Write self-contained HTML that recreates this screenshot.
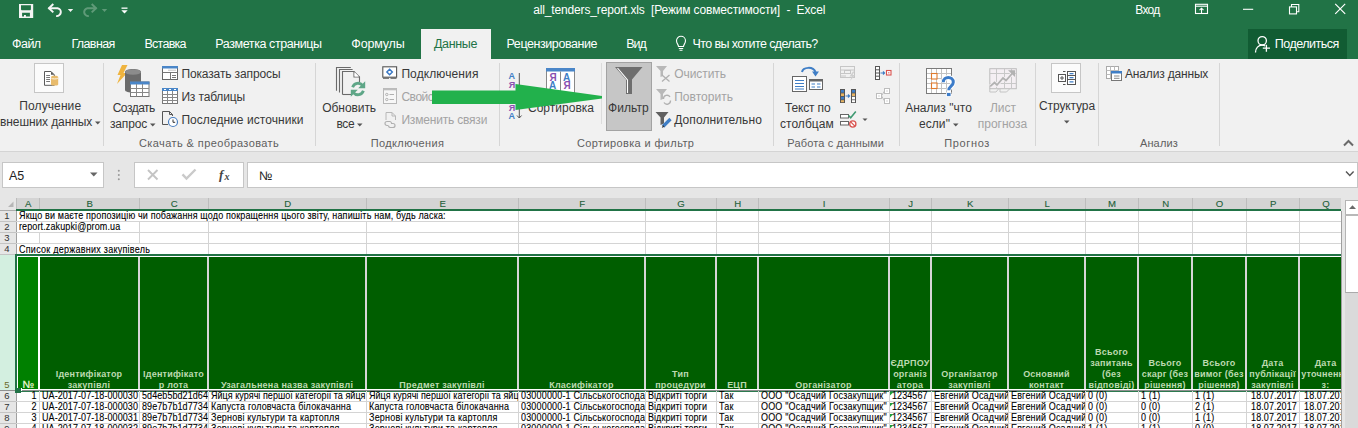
<!DOCTYPE html><html><head><meta charset="utf-8"><style>
*{margin:0;padding:0;box-sizing:border-box}
html,body{width:1358px;height:428px;overflow:hidden;background:#fff;font-family:"Liberation Sans",sans-serif}
.ab{position:absolute}
.t{position:absolute;white-space:nowrap;line-height:1}
.w{color:#fff}
.rb{color:#444;font-size:12px}
.dis{color:#a6a6a6}
.gl{color:#666;font-size:12px}
.sep{position:absolute;width:1px;background:#d6d6d6;top:63px;height:83px}
.cell{position:absolute;white-space:nowrap;overflow:hidden;font-size:9px;line-height:11px;color:#000}
.hd{position:absolute;overflow:hidden;background:#006100;color:#b7dcae;font-weight:bold;font-size:10px;line-height:11px;text-align:center;display:flex;flex-direction:column;justify-content:flex-end}
</style></head><body>

<div class="ab" style="left:0;top:0;width:1358px;height:59px;background:#217346"></div>
<div class="ab" style="left:0;top:59px;width:1358px;height:93px;background:#f1f1f1"></div>
<div class="ab" style="left:0;top:151px;width:1358px;height:1px;background:#d4d4d4"></div>
<div class="ab" style="left:0;top:152px;width:1358px;height:46px;background:#e6e6e6"></div>
<svg class="ab" style="left:0;top:0" width="140" height="29" viewBox="0 0 140 29">
<path fill="#f4f4f4" fill-rule="evenodd" d="M19 4 H33.2 V18 H19 Z M21 5.2 V9.6 L21.6 10.2 H30.3 L30.9 9.6 V5.2 Z M22.1 12.7 V16.5 H24 V15 H25.9 V16.5 H29.9 V12.7 Z"/>
<g fill="none" stroke="#f4f4f4" stroke-width="2">
<path d="M48.5 8.2 H57.6 A3.9 3.9 0 0 1 56.2 15.9"/>
<path d="M53.3 4 L49 8.2 L53.3 12.4"/>
</g>
<path d="M67.8 8.9 H73.2 L70.5 11.9 Z" fill="#f4f4f4"/>
<g fill="none" stroke="#5f9a78" stroke-width="2">
<path d="M96.5 8.2 H87.4 A3.9 3.9 0 0 0 88.8 15.9"/>
<path d="M91.7 4 L96 8.2 L91.7 12.4"/>
</g>
<path d="M101.8 8.9 H107.2 L104.5 11.9 Z" fill="#5f9a78"/>
<rect x="121.5" y="7.5" width="6" height="1.3" fill="#fff"/>
<path d="M121.3 10.3 H127.7 L124.5 13.6 Z" fill="#fff"/>
</svg>
<div class="t" style="left:533.3px;top:3.64px;font-size:12px;color:#fff;letter-spacing:-0.154px;">all_tenders_report.xls&nbsp; [Режим совместимости]&nbsp; -&nbsp; Excel</div>
<div class="t" style="left:1135.2px;top:3.64px;font-size:12px;color:#fff;letter-spacing:-0.664px;">Вход</div>
<svg class="ab" style="left:1190px;top:0" width="168" height="24" viewBox="1190 0 168 24">
<g fill="none" stroke="#fff" stroke-width="1.1">
<rect x="1195.5" y="4.3" width="12" height="9.2"/>
<path d="M1195.5 6.2 H1207.5"/>
<path d="M1201.5 13.5 V8.3 M1199.5 10.2 L1201.5 8.2 L1203.5 10.2"/>
<path d="M1243 9.3 H1253.2"/>
<rect x="1289.5" y="6.9" width="7" height="7"/>
<path d="M1291.5 6.9 V4.5 H1298.8 V11.8 H1296.5"/>
</g>
<path d="M1335.2 3.8 L1345.2 13.8 M1345.2 3.8 L1335.2 13.8" stroke="#fff" stroke-width="1.2"/>
</svg>
<div class="ab" style="left:421px;top:29px;width:70px;height:30px;background:#f1f1f1"></div>
<div class="t" style="left:12.0px;top:37.82px;font-size:12.5px;color:#fff;letter-spacing:-0.534px;">Файл</div>
<div class="t" style="left:71.4px;top:37.82px;font-size:12.5px;color:#fff;letter-spacing:-0.611px;">Главная</div>
<div class="t" style="left:144.5px;top:37.82px;font-size:12.5px;color:#fff;letter-spacing:-0.738px;">Вставка</div>
<div class="t" style="left:215.3px;top:37.82px;font-size:12.5px;color:#fff;letter-spacing:-0.412px;">Разметка страницы</div>
<div class="t" style="left:351.3px;top:37.82px;font-size:12.5px;color:#fff;letter-spacing:-0.158px;">Формулы</div>
<div class="t" style="left:506.5px;top:37.82px;font-size:12.5px;color:#fff;letter-spacing:-0.424px;">Рецензирование</div>
<div class="t" style="left:626.2px;top:37.82px;font-size:12.5px;color:#fff;letter-spacing:-0.942px;">Вид</div>
<div class="t" style="left:433.9px;top:37.82px;font-size:12.5px;color:#217346;letter-spacing:-0.312px;">Данные</div>
<svg class="ab" style="left:673.5px;top:35px" width="14" height="18" viewBox="0 0 14 18">
<g fill="none" stroke="#fff" stroke-width="1.1">
<path d="M4.5 11.5 C4.5 9.5 2.5 8.5 2.5 5.8 A4.5 4.5 0 0 1 11.5 5.8 C11.5 8.5 9.5 9.5 9.5 11.5 Z"/>
<path d="M4.8 13.5 H9.2 M5.5 15.3 H8.5"/>
</g></svg>
<div class="t" style="left:692.5px;top:37.82px;font-size:12.5px;color:#fff;letter-spacing:-0.590px;">Что вы хотите сделать?</div>
<div class="ab" style="left:1248px;top:29px;width:99px;height:30px;background:#115c33"></div>
<svg class="ab" style="left:1250px;top:32px" width="24" height="24" viewBox="0 0 24 24">
<g fill="none" stroke="#fff" stroke-width="1.3">
<circle cx="12.2" cy="8.8" r="4.2"/>
<path d="M5.5 20.5 C5.5 16 8.5 13.2 12 13.2 C13.3 13.2 14.3 13.5 15.2 14"/>
<path d="M16.4 12.7 V19.7 M12.8 16.2 H20"/>
</g></svg>
<div class="t" style="left:1274.8px;top:37.82px;font-size:12.5px;color:#fff;letter-spacing:-0.513px;">Поделиться</div>
<div class="sep" style="left:103px"></div>
<div class="sep" style="left:315px"></div>
<div class="sep" style="left:499px"></div>
<div class="sep" style="left:773px"></div>
<div class="sep" style="left:899px"></div>
<div class="sep" style="left:1035px"></div>
<div class="sep" style="left:1098px"></div>
<div class="sep" style="left:1219px"></div>
<div class="ab" style="left:601px;top:63px;width:1px;height:61px;background:#dcdcdc"></div>
<div class="ab" style="left:34px;top:63px;width:30px;height:30px;background:#fbfbfb;border:1px solid #c6c6c6"></div>
<svg class="ab" style="left:34px;top:63px" width="30" height="30" viewBox="0 0 30 30">
<path d="M10.5 8.5 H17 L20.3 11.8 V22.3 H10.5 Z" fill="#fff" stroke="#5a5a5a" stroke-width="1"/>
<path d="M17 8.5 L20.3 11.8 H17 Z" fill="#5a5a5a"/>
<path d="M12.2 12.5 H16 M12.2 14.5 H16 M12.2 16.5 H16 M12.2 18.5 H16" stroke="#777" stroke-width="1"/>
<path d="M17 14 C17 12.4 24.2 12.4 24.2 14 V21.4 C24.2 23 17 23 17 21.4 Z" fill="#e8bb6c"/>
<path d="M17.3 15.2 C18.5 16.2 22.7 16.2 23.9 15.2" fill="none" stroke="#fff" stroke-width="0.8"/>
</svg>
<div class="t" style="left:19.3px;top:99.74px;font-size:12px;color:#383838;letter-spacing:0.103px;">Получение</div>
<div class="t" style="left:0.0px;top:115.84px;font-size:12px;color:#383838;letter-spacing:-0.095px;">внешних данных</div>
<svg class="ab" style="left:95px;top:121px" width="6" height="4"><path d="M0 0.5H5.5L2.75 3.5Z" fill="#555"/></svg>
<svg class="ab" style="left:110px;top:60px" width="45" height="40" viewBox="0 0 45 40">
<path d="M12 5 L17.5 5 L13.5 13 L17 13 L7 24 L10.5 15 L7.5 15 Z" fill="#efb43f"/>
<path d="M15 12 C15 8 31 8 31 12 V30 C31 33.5 15 33.5 15 30 Z" fill="#6b6b6b"/>
<ellipse cx="23" cy="12" rx="8" ry="2.8" fill="#8c8c8c"/>
<rect x="20.5" y="22" width="18.5" height="14.5" fill="#fff" stroke="#777" stroke-width="1"/>
<rect x="20" y="21.5" width="19.5" height="3" fill="#4a86c8"/>
<path d="M20.5 28.5 H39 M20.5 32.5 H39 M26.5 24 V36.5 M32.5 24 V36.5" stroke="#888" stroke-width="1"/>
</svg>
<div class="t" style="left:112.7px;top:102.24px;font-size:12px;color:#383838;letter-spacing:-0.487px;">Создать</div>
<div class="t" style="left:109.9px;top:117.84px;font-size:12px;color:#383838;letter-spacing:-0.122px;">запрос</div>
<svg class="ab" style="left:150px;top:123px" width="6" height="4"><path d="M0 0.5H5.5L2.75 3.5Z" fill="#555"/></svg>
<svg class="ab" style="left:160px;top:64px" width="20" height="66" viewBox="0 0 20 66">
<rect x="2.5" y="2.5" width="15" height="13" fill="#fff" stroke="#666"/>
<rect x="2" y="2" width="16" height="2.5" fill="#4a86c8"/>
<path d="M2.5 8.5 H17.5 M10.5 8.5 V15.5 M12 11.5 H16 M12 13.5 H16" stroke="#777"/>
<path d="M8.5 6.2 H16.5" stroke="#888" stroke-dasharray="1 1"/>
<rect x="2.5" y="24.5" width="15" height="15" fill="#fff" stroke="#777"/>
<rect x="2" y="24" width="16" height="3" fill="#4a86c8"/>
<path d="M4 25.5 H6 M9 25.5 H11 M14 25.5 H16" stroke="#fff"/>
<path d="M2.5 30.5 H17.5 M2.5 33.5 H17.5 M2.5 36.5 H17.5 M7.5 27 V39.5 M12.5 27 V39.5" stroke="#888"/>
<path d="M2.5 47.5 H9.5 L12.5 50.5 V52 M2.5 47.5 V60.5 H8" fill="none" stroke="#555"/>
<path d="M9.5 47.5 V50.5 H12.5" fill="none" stroke="#555"/>
<circle cx="13" cy="58" r="4.5" fill="#fff" stroke="#4a7fc1" stroke-width="1.2"/>
<path d="M13 55.5 V58.3 H15.2" fill="none" stroke="#333" stroke-width="1"/>
</svg>
<div class="t" style="left:181.4px;top:68.44px;font-size:12px;color:#383838;letter-spacing:-0.125px;">Показать запросы</div>
<div class="t" style="left:181.4px;top:91.14px;font-size:12px;color:#383838;letter-spacing:-0.145px;">Из таблицы</div>
<div class="t" style="left:181.4px;top:114.14px;font-size:12px;color:#383838;letter-spacing:0.055px;">Последние источники</div>
<div class="t" style="left:139.0px;top:137.59px;font-size:11px;color:#5f5f5f;letter-spacing:0.407px;">Скачать &amp; преобразовать</div>
<svg class="ab" style="left:330px;top:62px" width="40" height="38" viewBox="0 0 40 38">
<g fill="none" stroke="#6a6a6a" stroke-width="1.1">
<path d="M6.5 28.8 V5.5 H20.8"/>
<path d="M9.5 30.6 V7.5 H22.6"/>
<path d="M12.5 32.5 V9.5 H24 L29.5 15 V20"/>
<path d="M12.5 32.5 H21"/>
<path d="M24 9.5 V15 H29.5"/>
</g>
<path d="M24.5 10 L29 14.5 H24.5 Z" fill="#fff"/>
<g fill="none" stroke="#5ea687" stroke-width="2.8">
<path d="M22.6 25.2 A5.8 5.8 0 0 1 32.6 23.4"/>
<path d="M33.4 28.8 A5.8 5.8 0 0 1 23.4 30.6"/>
</g>
<path d="M35.2 19.2 V26.2 H28.2 Z" fill="#5ea687"/>
<path d="M20.8 34.8 V27.8 H27.8 Z" fill="#5ea687"/>
</svg>
<div class="t" style="left:322.3px;top:102.14px;font-size:12px;color:#383838;letter-spacing:-0.080px;">Обновить</div>
<div class="t" style="left:336.4px;top:117.84px;font-size:12px;color:#383838;letter-spacing:-0.341px;">все</div>
<svg class="ab" style="left:357px;top:123px" width="6" height="4"><path d="M0 0.5H5.5L2.75 3.5Z" fill="#555"/></svg>
<svg class="ab" style="left:380px;top:64px" width="20" height="66" viewBox="0 0 20 66">
<rect x="2.8" y="2.8" width="13.8" height="10.4" fill="#fff" stroke="#555" stroke-width="1.1"/>
<path d="M3 14.3 H9 M10.5 14.3 H16.5" stroke="#555" stroke-width="1.1"/>
<path d="M9.6 5.3 L12.3 8 L9.6 10.7 L6.9 8 Z" fill="#fff" stroke="#3a78c4" stroke-width="1.5"/>
<rect x="3.5" y="24.5" width="13" height="15" fill="#f7f7f7" stroke="#b8b8b8"/>
<rect x="3.5" y="24.5" width="13" height="1.8" fill="#bdbdbd"/>
<circle cx="6.8" cy="30.5" r="1.2" fill="none" stroke="#b0b0b0"/><circle cx="6.8" cy="35.5" r="1.2" fill="none" stroke="#b0b0b0"/>
<path d="M9.5 30.5 H14 M9.5 35.5 H14" stroke="#b0b0b0"/>
<path d="M6 56 V48.5 H12 L15.5 52 V56 M12 48.5 V52 H15.5" fill="none" stroke="#b8b8b8"/>
<path d="M8.5 61.5 H7 A2 2 0 0 1 7 57.5 H10 A2 2 0 0 1 11.5 59 M11 59.5 H13 A2 2 0 0 1 13 63.5 H10 A2 2 0 0 1 8.5 62" fill="none" stroke="#b0b0b0" stroke-width="1.2"/>
</svg>
<div class="t" style="left:401.4px;top:68.44px;font-size:12px;color:#383838;letter-spacing:0.107px;">Подключения</div>
<div class="t" style="left:401.4px;top:91.14px;font-size:12px;color:#a3a3a3;letter-spacing:-0.459px;">Свойства</div>
<div class="t" style="left:401.4px;top:114.14px;font-size:12px;color:#a3a3a3;letter-spacing:-0.186px;">Изменить связи</div>
<div class="t" style="left:370.8px;top:137.59px;font-size:11px;color:#5f5f5f;letter-spacing:0.355px;">Подключения</div>
<svg class="ab" style="left:505px;top:66px" width="75" height="56" viewBox="0 0 75 56">
<g font-family="Liberation Sans" font-size="9" font-weight="bold">
<text x="3.5" y="13.3" fill="#3f7ec6">А</text>
<text x="3.8" y="21.8" fill="#8a4fb0">Я</text>
<text x="3.8" y="44.7" fill="#8a4fb0">Я</text>
<text x="3.5" y="52.6" fill="#3f7ec6">А</text>
</g>
<path d="M14.3 7 V22 M14.3 38 V52 M12 49.5 L14.3 52 L16.6 49.5" fill="none" stroke="#555" stroke-width="1"/>
<rect x="41.5" y="3.5" width="28" height="24" fill="#fff" stroke="#888"/>
<rect x="41" y="2" width="29" height="3.5" fill="#4a86c8"/>
<path d="M55.5 5.5 V27.5" stroke="#888"/>
<g font-family="Liberation Sans" font-size="10" font-weight="bold">
<text x="44.5" y="14.6" fill="#8a4fb0">Я</text>
<text x="44" y="22.8" fill="#3f7ec6">А</text>
<text x="58" y="14.6" fill="#3f7ec6">А</text>
<text x="58.5" y="22.8" fill="#8a4fb0">Я</text>
</g>
</svg>
<div class="t" style="left:528.0px;top:102.14px;font-size:12px;color:#383838;letter-spacing:0.014px;">Сортировка</div>
<div class="ab" style="left:606px;top:62px;width:46px;height:69px;background:#c6c6c6;border:1px solid #a3a3a3"></div>
<svg class="ab" style="left:606px;top:62px" width="46" height="36" viewBox="0 0 46 36">
<path d="M9 5 H36.5 L26 17.5 V32 H20 V17.5 Z" fill="#6e6e6e"/>
<path d="M11.5 6 L21.5 18 V31" fill="none" stroke="#fff" stroke-width="1.1"/>
</svg>
<div class="t" style="left:608.0px;top:102.14px;font-size:12px;color:#383838;letter-spacing:0.081px;">Фильтр</div>
<svg class="ab" style="left:654px;top:64px" width="20" height="66" viewBox="0 0 20 66">
<path d="M2 2 H13 L9 7 V12 L6.5 13 V7 Z" fill="#b8b8b8"/>
<path d="M8 11 L15.5 17.5 M15.5 11 L8 17.5" stroke="#b0b0b0" stroke-width="1.3"/>
<path d="M2 25 H13 L9 30 V35 L6.5 36 V30 Z" fill="#b8b8b8"/>
<path d="M9.5 35 A3.5 3.5 0 0 1 16 33 M16.5 36.5 A3.5 3.5 0 0 1 10 38.5" fill="none" stroke="#b0b0b0" stroke-width="1.3"/>
<path d="M1.5 48 H14.5 L10 53.5 V59.5 L6.5 61 V53.5 Z" fill="#606060"/>
<path d="M9 62.5 L16.5 55" stroke="#3f7ec6" stroke-width="3.2"/><path d="M7.8 64 L9 61 L10.5 62.5 Z" fill="#333"/>
</svg>
<div class="t" style="left:674.2px;top:68.44px;font-size:12px;color:#a3a3a3;letter-spacing:-0.056px;">Очистить</div>
<div class="t" style="left:674.2px;top:91.14px;font-size:12px;color:#a3a3a3;letter-spacing:0.025px;">Повторить</div>
<div class="t" style="left:674.2px;top:114.14px;font-size:12px;color:#383838;letter-spacing:0.110px;">Дополнительно</div>
<div class="t" style="left:577.0px;top:137.59px;font-size:11px;color:#5f5f5f;letter-spacing:0.369px;">Сортировка и фильтр</div>
<svg class="ab" style="left:788px;top:64px" width="40" height="32" viewBox="0 0 40 32">
<rect x="4.5" y="12.5" width="14" height="15" fill="#fff" stroke="#666"/>
<path d="M7 16.5 H16 M7 19.5 H16 M7 22.5 H16 M7 25 H16" stroke="#3f7ec6"/>
<rect x="21.5" y="15.5" width="13" height="10" fill="#fff" stroke="#666"/>
<rect x="21" y="15" width="14" height="2.5" fill="#666"/>
<path d="M23.5 20 H27 M29 20 H32.5 M23.5 23 H27 M29 23 H32.5" stroke="#3f7ec6"/>
<path d="M14 8 C15 3 25 2 27.5 8" fill="none" stroke="#3f7ec6" stroke-width="2"/>
<path d="M24 7.5 H31 L27.5 12.5 Z" fill="#3f7ec6"/>
</svg>
<div class="t" style="left:785.0px;top:102.14px;font-size:12px;color:#383838;letter-spacing:-0.165px;">Текст по</div>
<div class="t" style="left:780.0px;top:117.84px;font-size:12px;color:#383838;letter-spacing:0.031px;">столбцам</div>
<svg class="ab" style="left:838px;top:64px" width="58" height="66" viewBox="0 0 58 66">
<g fill="none" stroke="#c6c6c6" stroke-width="1">
<rect x="2.5" y="2.5" width="14" height="11"/>
<path d="M2.5 6 H16.5 M2.5 9.5 H8 M2.5 12 H8"/>
<rect x="6.5" y="6.5" width="6" height="3"/>
</g>
<path d="M15 7.5 L11.5 12.5 H14 L12 17 L17 11 H14.5 L16.5 7.5 Z" fill="#cfcfcf"/>
<rect x="2" y="25" width="5" height="14" fill="#555"/>
<rect x="3" y="26" width="3" height="2.6" fill="#3f7ec6"/><rect x="3" y="29.4" width="3" height="2.6" fill="#e7b463"/><rect x="3" y="32.8" width="3" height="2.6" fill="#3f7ec6"/><rect x="3" y="36.2" width="3" height="2" fill="#e7b463"/>
<rect x="13" y="25" width="5" height="14" fill="#555"/>
<rect x="14" y="26" width="3" height="2.6" fill="#3f7ec6"/><rect x="14" y="29.4" width="3" height="2.6" fill="#e7b463"/><rect x="14" y="32.8" width="3" height="2.6" fill="#fff"/><rect x="14" y="36.2" width="3" height="2" fill="#fff"/>
<path d="M7.5 32 H11.5 M10 30.5 L11.6 32 L10 33.5" fill="none" stroke="#3f7ec6" stroke-width="1.1"/>
<rect x="2.5" y="50.5" width="8" height="3.5" fill="#fff" stroke="#666"/>
<rect x="2.5" y="57.5" width="8" height="3.5" fill="#fff" stroke="#666"/>
<path d="M10.5 51.5 L12.7 53.8 L17.8 47.5" fill="none" stroke="#3f9a72" stroke-width="1.6"/>
<circle cx="14.8" cy="60" r="3.1" fill="#fff" stroke="#d9534f" stroke-width="1.3"/>
<path d="M12.7 57.9 L16.9 62.1" stroke="#d9534f" stroke-width="1.3"/>
<path d="M24.5 54.5 H29.5 L27 57 Z" fill="#555"/>
<rect x="37.5" y="2.5" width="4" height="13" fill="#fff" stroke="#555"/>
<path d="M37.5 5.8 H41.5 M37.5 9 H41.5 M37.5 12.2 H41.5" stroke="#555"/>
<path d="M42.5 9 H46.5 M45 7.5 L46.6 9 L45 10.5" fill="none" stroke="#3f7ec6" stroke-width="1.1"/>
<rect x="48.5" y="6.5" width="4.5" height="4.5" fill="#fff" stroke="#d9534f" stroke-width="1.1"/>
<rect x="50.2" y="8.2" width="1.2" height="1.2" fill="#d9534f"/>
<g fill="#fff" stroke="#bdbdbd">
<path d="M43.5 31.8 L46.5 27 M43.5 31.8 L46.5 37" fill="none"/>
<rect x="38.5" y="29.5" width="5" height="5"/><rect x="46.5" y="24.5" width="5" height="5"/><rect x="46.5" y="34.5" width="5" height="5"/>
</g>
<path d="M40 32 H42 M48 27 H50 M48 37 H50" stroke="#c8c8c8" stroke-width="0.8"/>
</svg>
<div class="t" style="left:787.3px;top:137.59px;font-size:11px;color:#5f5f5f;letter-spacing:0.155px;">Работа с данными</div>
<svg class="ab" style="left:924px;top:66px" width="34" height="34" viewBox="0 0 34 34">
<rect x="2.5" y="2.5" width="25" height="25" fill="#fff" stroke="#7a7a7a" stroke-width="1"/>
<path d="M3 7.5 H27 M3 12.5 H27 M3 17.5 H27 M3 22.5 H27 M7.5 3 V27 M12.5 3 V27 M17.5 3 V27 M22.5 3 V27" stroke="#c2c2c2"/>
<rect x="7.5" y="7.5" width="5.5" height="5.5" fill="#fff" stroke="#e07b2e" stroke-width="1.1"/>
<rect x="7.5" y="17" width="5.5" height="5.5" fill="#fff" stroke="#e07b2e" stroke-width="1.1"/>
<path d="M19.3 16.2 C19.3 9.8 29.3 9.8 29.3 16.2 C29.3 20 24.8 20.3 24.8 24.2" fill="none" stroke="#fff" stroke-width="5"/>
<path d="M19.3 16.2 C19.3 9.8 29.3 9.8 29.3 16.2 C29.3 20 24.8 20.3 24.8 24.2" fill="none" stroke="#3d7cc9" stroke-width="3"/>
<rect x="22.6" y="26.6" width="4.4" height="4" fill="#3d7cc9" stroke="#fff" stroke-width="0.8"/>
</svg>
<div class="t" style="left:905.2px;top:102.14px;font-size:12px;color:#383838;letter-spacing:0.027px;">Анализ "что</div>
<div class="t" style="left:918.9px;top:117.84px;font-size:12px;color:#383838;letter-spacing:0.092px;">если"</div>
<svg class="ab" style="left:953px;top:123px" width="6" height="4"><path d="M0 0.5H5.5L2.75 3.5Z" fill="#555"/></svg>
<svg class="ab" style="left:987px;top:66px" width="32" height="30" viewBox="0 0 32 30">
<rect x="2.8" y="2.7" width="26.5" height="20" fill="#f4eff3" stroke="#bdbdbd" stroke-width="1"/>
<path d="M9.5 3 V22.5 M17.5 3 V22.5 M24.5 3 V22.5 M3 7.5 H29 M3 17.5 H29" stroke="#c8c8c8" stroke-width="1"/>
<path d="M3.2 20.3 L7.5 16.5 L10 19 L16 12 L19 14.5 L26.5 6" fill="none" stroke="#f4eff3" stroke-width="3.5"/>
<path d="M3.2 20.3 L7.5 16.5 L10 19 L16 12 L19 14.5 L26.5 6" fill="none" stroke="#b2b2b2" stroke-width="1.8"/>
<path d="M21 4.2 H28 V11 Z" fill="#b2b2b2"/>
<path d="M2.8 22.5 V26 H9 L11.5 23 M13 23 V26 H19.5 L22.5 23" fill="none" stroke="#c4c4c4" stroke-width="1"/>
</svg>
<div class="t" style="left:990.0px;top:102.14px;font-size:12px;color:#a3a3a3;letter-spacing:-0.020px;">Лист</div>
<div class="t" style="left:977.8px;top:117.84px;font-size:12px;color:#a3a3a3;letter-spacing:-0.022px;">прогноза</div>
<div class="t" style="left:944.3px;top:137.59px;font-size:11px;color:#5f5f5f;letter-spacing:0.631px;">Прогноз</div>
<div class="ab" style="left:1051px;top:63px;width:30px;height:30px;background:#fbfbfb;border:1px solid #c6c6c6"></div>
<svg class="ab" style="left:1051px;top:63px" width="30" height="30" viewBox="0 0 30 30">
<rect x="7.5" y="11.5" width="7" height="7" fill="#fff" stroke="#555"/>
<path d="M9 15 H13 M11 13 V17" stroke="#555"/>
<path d="M12 8.5 H14.5 M12 21.5 H14.5" stroke="#555"/>
<rect x="16.5" y="8.5" width="8" height="13" fill="#fff" stroke="#555"/>
<path d="M16.5 12.5 H24.5 M16.5 16.5 H24.5" stroke="#555"/>
<path d="M18.5 10.6 H22.5 M18.5 14.6 H22.5 M18.5 18.8 H22.5" stroke="#3f7ec6" stroke-width="1.3"/>
</svg>
<div class="t" style="left:1039.0px;top:100.04px;font-size:12px;color:#383838;letter-spacing:-0.104px;">Структура</div>
<svg class="ab" style="left:1064px;top:120px" width="6" height="4"><path d="M0 0.5H5.5L2.75 3.5Z" fill="#555"/></svg>
<svg class="ab" style="left:1104px;top:64px" width="20" height="20" viewBox="0 0 20 20">
<rect x="2.5" y="2.5" width="12" height="12" fill="#fff" stroke="#aaa"/>
<path d="M2.5 6.5 H14.5 M2.5 10.5 H14.5 M6.5 2.5 V14.5 M10.5 2.5 V14.5" stroke="#bbb"/>
<rect x="7.5" y="7.5" width="10" height="9" fill="#fff" stroke="#777"/>
<rect x="7" y="7" width="11" height="2.5" fill="#3f7ec6"/>
<path d="M10 12 H15.5 M10 14.3 H15.5" stroke="#888"/>
</svg>
<div class="t" style="left:1125.0px;top:68.44px;font-size:12px;color:#383838;letter-spacing:-0.170px;">Анализ данных</div>
<div class="t" style="left:1139.9px;top:137.59px;font-size:11px;color:#5f5f5f;letter-spacing:0.160px;">Анализ</div>
<svg class="ab" style="left:1343px;top:139px" width="12" height="8"><path d="M1 6.5 L5.5 2 L10 6.5" fill="none" stroke="#6a6a6a" stroke-width="2"/></svg>
<div class="ab" style="left:2px;top:162px;width:102px;height:26px;background:#fff;border:1px solid #c6c6c6"></div>
<div class="t" style="left:9px;top:170px;font-size:12.5px;color:#222">A5</div>
<svg class="ab" style="left:89px;top:171px" width="10" height="7"><path d="M1 1.5H8.5L4.75 5.5Z" fill="#666"/></svg>
<svg class="ab" style="left:116px;top:168px" width="6" height="14"><circle cx="2.8" cy="2.8" r="1" fill="#999"/><circle cx="2.8" cy="7" r="1" fill="#999"/><circle cx="2.8" cy="11.2" r="1" fill="#999"/></svg>
<div class="ab" style="left:134px;top:162px;width:110px;height:26px;background:#fff;border:1px solid #c6c6c6"></div>
<svg class="ab" style="left:134px;top:162px" width="110" height="25" viewBox="0 0 110 25">
<path d="M14 8 L23.5 17.5 M23.5 8 L14 17.5" stroke="#c4c4c4" stroke-width="1.9"/>
<path d="M48.5 12.3 L52.5 16.5 L61.5 7.5" fill="none" stroke="#cacaca" stroke-width="2.4"/>
<text x="85" y="16.5" font-family="Liberation Serif" font-style="italic" font-weight="bold" font-size="13" fill="#444">f</text>
<text x="90.5" y="17.5" font-family="Liberation Serif" font-style="italic" font-weight="bold" font-size="10" fill="#444">x</text>
</svg>
<div class="ab" style="left:247px;top:162px;width:111px;height:26px;background:#fff;border:1px solid #c6c6c6;border-right:none"></div>
<div class="ab" style="left:247px;top:162px;width:1111px;height:26px;background:#fff;border:1px solid #c6c6c6"></div>
<div class="t" style="left:259px;top:169.8px;font-size:12.5px;color:#222">№</div>
<svg class="ab" style="left:1344px;top:170px" width="12" height="8"><path d="M2 1.5 L5.8 5.5 L9.6 1.5" fill="none" stroke="#555" stroke-width="1.4"/></svg>
<div class="ab" style="left:0px;top:198px;width:1358px;height:230px;background:#fff;"></div>
<div class="ab" style="left:0px;top:198px;width:16px;height:12px;background:#e6e6e6;"></div>
<svg class="ab" style="left:8px;top:201px" width="6" height="7"><path d="M5.5 0.5 V6 H0 Z" fill="#b5b5b5"/></svg>
<div class="ab" style="left:0px;top:210px;width:16px;height:1px;background:#ababab;"></div>
<div class="ab" style="left:16px;top:198px;width:1325px;height:11px;background:#d4d4d4;"></div>
<div class="ab" style="left:16px;top:198px;width:1px;height:11px;background:#bdbdbd;"></div>
<div class="t" style="left:-1.8999999999999986px;top:198.5px;width:60px;text-align:center;font-size:9.6px;color:#1f5f3a;-webkit-text-stroke:0.12px #1f5f3a">A</div>
<div class="ab" style="left:39px;top:198px;width:1px;height:11px;background:#bdbdbd;"></div>
<div class="t" style="left:59.6px;top:198.5px;width:60px;text-align:center;font-size:9.6px;color:#1f5f3a;-webkit-text-stroke:0.12px #1f5f3a">B</div>
<div class="ab" style="left:139px;top:198px;width:1px;height:11px;background:#bdbdbd;"></div>
<div class="t" style="left:144.1px;top:198.5px;width:60px;text-align:center;font-size:9.6px;color:#1f5f3a;-webkit-text-stroke:0.12px #1f5f3a">C</div>
<div class="ab" style="left:208px;top:198px;width:1px;height:11px;background:#bdbdbd;"></div>
<div class="t" style="left:257.6px;top:198.5px;width:60px;text-align:center;font-size:9.6px;color:#1f5f3a;-webkit-text-stroke:0.12px #1f5f3a">D</div>
<div class="ab" style="left:366px;top:198px;width:1px;height:11px;background:#bdbdbd;"></div>
<div class="t" style="left:412.6px;top:198.5px;width:60px;text-align:center;font-size:9.6px;color:#1f5f3a;-webkit-text-stroke:0.12px #1f5f3a">E</div>
<div class="ab" style="left:518px;top:198px;width:1px;height:11px;background:#bdbdbd;"></div>
<div class="t" style="left:552.1px;top:198.5px;width:60px;text-align:center;font-size:9.6px;color:#1f5f3a;-webkit-text-stroke:0.12px #1f5f3a">F</div>
<div class="ab" style="left:645px;top:198px;width:1px;height:11px;background:#bdbdbd;"></div>
<div class="t" style="left:651.1px;top:198.5px;width:60px;text-align:center;font-size:9.6px;color:#1f5f3a;-webkit-text-stroke:0.12px #1f5f3a">G</div>
<div class="ab" style="left:716px;top:198px;width:1px;height:11px;background:#bdbdbd;"></div>
<div class="t" style="left:707.6px;top:198.5px;width:60px;text-align:center;font-size:9.6px;color:#1f5f3a;-webkit-text-stroke:0.12px #1f5f3a">H</div>
<div class="ab" style="left:758px;top:198px;width:1px;height:11px;background:#bdbdbd;"></div>
<div class="t" style="left:794.1px;top:198.5px;width:60px;text-align:center;font-size:9.6px;color:#1f5f3a;-webkit-text-stroke:0.12px #1f5f3a">I</div>
<div class="ab" style="left:889px;top:198px;width:1px;height:11px;background:#bdbdbd;"></div>
<div class="t" style="left:880.6px;top:198.5px;width:60px;text-align:center;font-size:9.6px;color:#1f5f3a;-webkit-text-stroke:0.12px #1f5f3a">J</div>
<div class="ab" style="left:931px;top:198px;width:1px;height:11px;background:#bdbdbd;"></div>
<div class="t" style="left:940.1px;top:198.5px;width:60px;text-align:center;font-size:9.6px;color:#1f5f3a;-webkit-text-stroke:0.12px #1f5f3a">K</div>
<div class="ab" style="left:1008px;top:198px;width:1px;height:11px;background:#bdbdbd;"></div>
<div class="t" style="left:1017.1px;top:198.5px;width:60px;text-align:center;font-size:9.6px;color:#1f5f3a;-webkit-text-stroke:0.12px #1f5f3a">L</div>
<div class="ab" style="left:1085px;top:198px;width:1px;height:11px;background:#bdbdbd;"></div>
<div class="t" style="left:1082.1px;top:198.5px;width:60px;text-align:center;font-size:9.6px;color:#1f5f3a;-webkit-text-stroke:0.12px #1f5f3a">M</div>
<div class="ab" style="left:1138px;top:198px;width:1px;height:11px;background:#bdbdbd;"></div>
<div class="t" style="left:1135.6px;top:198.5px;width:60px;text-align:center;font-size:9.6px;color:#1f5f3a;-webkit-text-stroke:0.12px #1f5f3a">N</div>
<div class="ab" style="left:1192px;top:198px;width:1px;height:11px;background:#bdbdbd;"></div>
<div class="t" style="left:1189.6px;top:198.5px;width:60px;text-align:center;font-size:9.6px;color:#1f5f3a;-webkit-text-stroke:0.12px #1f5f3a">O</div>
<div class="ab" style="left:1246px;top:198px;width:1px;height:11px;background:#bdbdbd;"></div>
<div class="t" style="left:1243.1px;top:198.5px;width:60px;text-align:center;font-size:9.6px;color:#1f5f3a;-webkit-text-stroke:0.12px #1f5f3a">P</div>
<div class="ab" style="left:1299px;top:198px;width:1px;height:11px;background:#bdbdbd;"></div>
<div class="t" style="left:1296.1px;top:198.5px;width:60px;text-align:center;font-size:9.6px;color:#1f5f3a;-webkit-text-stroke:0.12px #1f5f3a">Q</div>
<div class="ab" style="left:16px;top:209px;width:1325px;height:2px;background:#217346;"></div>
<div class="ab" style="left:0px;top:211px;width:16px;height:217px;background:#e6e6e6;"></div>
<div class="ab" style="left:0px;top:254px;width:15px;height:136px;background:#d3efe0;"></div>
<div class="ab" style="left:0px;top:221px;width:16px;height:1px;background:#c4c4c4;"></div>
<div class="t" style="left:0;top:211.25px;width:14px;text-align:center;font-size:9.5px;color:#333">1</div>
<div class="ab" style="left:0px;top:232px;width:16px;height:1px;background:#c4c4c4;"></div>
<div class="t" style="left:0;top:222.25px;width:14px;text-align:center;font-size:9.5px;color:#333">2</div>
<div class="ab" style="left:0px;top:243px;width:16px;height:1px;background:#c4c4c4;"></div>
<div class="t" style="left:0;top:233.25px;width:14px;text-align:center;font-size:9.5px;color:#333">3</div>
<div class="ab" style="left:0px;top:254px;width:16px;height:1px;background:#c4c4c4;"></div>
<div class="t" style="left:0;top:244.25px;width:14px;text-align:center;font-size:9.5px;color:#333">4</div>
<div class="t" style="left:0;top:379.95px;width:14px;text-align:center;font-size:9.5px;color:#6b6a2a">5</div>
<div class="ab" style="left:0px;top:401px;width:16px;height:1px;background:#c4c4c4;"></div>
<div class="t" style="left:0;top:391.25px;width:14px;text-align:center;font-size:9.5px;color:#333">6</div>
<div class="ab" style="left:0px;top:412px;width:16px;height:1px;background:#c4c4c4;"></div>
<div class="t" style="left:0;top:402.25px;width:14px;text-align:center;font-size:9.5px;color:#333">7</div>
<div class="ab" style="left:0px;top:423px;width:16px;height:1px;background:#c4c4c4;"></div>
<div class="t" style="left:0;top:413.25px;width:14px;text-align:center;font-size:9.5px;color:#333">8</div>
<div class="ab" style="left:0px;top:434px;width:16px;height:1px;background:#c4c4c4;"></div>
<div class="t" style="left:0;top:424.25px;width:14px;text-align:center;font-size:9.5px;color:#333">9</div>
<div class="ab" style="left:16px;top:211px;width:1px;height:217px;background:#a0a0a0;"></div>
<div class="ab" style="left:16px;top:221px;width:1325px;height:1px;background:#d4d4d4;"></div>
<div class="ab" style="left:16px;top:232px;width:1325px;height:1px;background:#d4d4d4;"></div>
<div class="ab" style="left:16px;top:243px;width:1325px;height:1px;background:#d4d4d4;"></div>
<div class="ab" style="left:39px;top:233px;width:1px;height:10px;background:#d4d4d4;"></div>
<div class="ab" style="left:139px;top:222px;width:1px;height:10px;background:#d4d4d4;"></div>
<div class="ab" style="left:139px;top:233px;width:1px;height:10px;background:#d4d4d4;"></div>
<div class="ab" style="left:208px;top:222px;width:1px;height:10px;background:#d4d4d4;"></div>
<div class="ab" style="left:208px;top:233px;width:1px;height:10px;background:#d4d4d4;"></div>
<div class="ab" style="left:208px;top:244px;width:1px;height:10px;background:#d4d4d4;"></div>
<div class="ab" style="left:366px;top:222px;width:1px;height:10px;background:#d4d4d4;"></div>
<div class="ab" style="left:366px;top:233px;width:1px;height:10px;background:#d4d4d4;"></div>
<div class="ab" style="left:366px;top:244px;width:1px;height:10px;background:#d4d4d4;"></div>
<div class="ab" style="left:518px;top:211px;width:1px;height:10px;background:#d4d4d4;"></div>
<div class="ab" style="left:518px;top:222px;width:1px;height:10px;background:#d4d4d4;"></div>
<div class="ab" style="left:518px;top:233px;width:1px;height:10px;background:#d4d4d4;"></div>
<div class="ab" style="left:518px;top:244px;width:1px;height:10px;background:#d4d4d4;"></div>
<div class="ab" style="left:645px;top:211px;width:1px;height:10px;background:#d4d4d4;"></div>
<div class="ab" style="left:645px;top:222px;width:1px;height:10px;background:#d4d4d4;"></div>
<div class="ab" style="left:645px;top:233px;width:1px;height:10px;background:#d4d4d4;"></div>
<div class="ab" style="left:645px;top:244px;width:1px;height:10px;background:#d4d4d4;"></div>
<div class="ab" style="left:716px;top:211px;width:1px;height:10px;background:#d4d4d4;"></div>
<div class="ab" style="left:716px;top:222px;width:1px;height:10px;background:#d4d4d4;"></div>
<div class="ab" style="left:716px;top:233px;width:1px;height:10px;background:#d4d4d4;"></div>
<div class="ab" style="left:716px;top:244px;width:1px;height:10px;background:#d4d4d4;"></div>
<div class="ab" style="left:758px;top:211px;width:1px;height:10px;background:#d4d4d4;"></div>
<div class="ab" style="left:758px;top:222px;width:1px;height:10px;background:#d4d4d4;"></div>
<div class="ab" style="left:758px;top:233px;width:1px;height:10px;background:#d4d4d4;"></div>
<div class="ab" style="left:758px;top:244px;width:1px;height:10px;background:#d4d4d4;"></div>
<div class="ab" style="left:889px;top:211px;width:1px;height:10px;background:#d4d4d4;"></div>
<div class="ab" style="left:889px;top:222px;width:1px;height:10px;background:#d4d4d4;"></div>
<div class="ab" style="left:889px;top:233px;width:1px;height:10px;background:#d4d4d4;"></div>
<div class="ab" style="left:889px;top:244px;width:1px;height:10px;background:#d4d4d4;"></div>
<div class="ab" style="left:931px;top:211px;width:1px;height:10px;background:#d4d4d4;"></div>
<div class="ab" style="left:931px;top:222px;width:1px;height:10px;background:#d4d4d4;"></div>
<div class="ab" style="left:931px;top:233px;width:1px;height:10px;background:#d4d4d4;"></div>
<div class="ab" style="left:931px;top:244px;width:1px;height:10px;background:#d4d4d4;"></div>
<div class="ab" style="left:1008px;top:211px;width:1px;height:10px;background:#d4d4d4;"></div>
<div class="ab" style="left:1008px;top:222px;width:1px;height:10px;background:#d4d4d4;"></div>
<div class="ab" style="left:1008px;top:233px;width:1px;height:10px;background:#d4d4d4;"></div>
<div class="ab" style="left:1008px;top:244px;width:1px;height:10px;background:#d4d4d4;"></div>
<div class="ab" style="left:1085px;top:211px;width:1px;height:10px;background:#d4d4d4;"></div>
<div class="ab" style="left:1085px;top:222px;width:1px;height:10px;background:#d4d4d4;"></div>
<div class="ab" style="left:1085px;top:233px;width:1px;height:10px;background:#d4d4d4;"></div>
<div class="ab" style="left:1085px;top:244px;width:1px;height:10px;background:#d4d4d4;"></div>
<div class="ab" style="left:1138px;top:211px;width:1px;height:10px;background:#d4d4d4;"></div>
<div class="ab" style="left:1138px;top:222px;width:1px;height:10px;background:#d4d4d4;"></div>
<div class="ab" style="left:1138px;top:233px;width:1px;height:10px;background:#d4d4d4;"></div>
<div class="ab" style="left:1138px;top:244px;width:1px;height:10px;background:#d4d4d4;"></div>
<div class="ab" style="left:1192px;top:211px;width:1px;height:10px;background:#d4d4d4;"></div>
<div class="ab" style="left:1192px;top:222px;width:1px;height:10px;background:#d4d4d4;"></div>
<div class="ab" style="left:1192px;top:233px;width:1px;height:10px;background:#d4d4d4;"></div>
<div class="ab" style="left:1192px;top:244px;width:1px;height:10px;background:#d4d4d4;"></div>
<div class="ab" style="left:1246px;top:211px;width:1px;height:10px;background:#d4d4d4;"></div>
<div class="ab" style="left:1246px;top:222px;width:1px;height:10px;background:#d4d4d4;"></div>
<div class="ab" style="left:1246px;top:233px;width:1px;height:10px;background:#d4d4d4;"></div>
<div class="ab" style="left:1246px;top:244px;width:1px;height:10px;background:#d4d4d4;"></div>
<div class="ab" style="left:1299px;top:211px;width:1px;height:10px;background:#d4d4d4;"></div>
<div class="ab" style="left:1299px;top:222px;width:1px;height:10px;background:#d4d4d4;"></div>
<div class="ab" style="left:1299px;top:233px;width:1px;height:10px;background:#d4d4d4;"></div>
<div class="ab" style="left:1299px;top:244px;width:1px;height:10px;background:#d4d4d4;"></div>
<div class="ab" style="left:19px;top:209.83px;width:1400px;height:11px;overflow:hidden"><div style="position:absolute;top:0;left:0;transform-origin:0 0;transform:scaleX(0.9);white-space:nowrap;font-size:10px;line-height:11px;color:#000;-webkit-text-stroke:0.1px #000;letter-spacing:0.172px">Якщо ви маєте пропозицію чи побажання щодо покращення цього звіту, напишіть нам, будь ласка:</div></div>
<div class="ab" style="left:19px;top:220.83px;width:1400px;height:11px;overflow:hidden"><div style="position:absolute;top:0;left:0;transform-origin:0 0;transform:scaleX(0.9);white-space:nowrap;font-size:10px;line-height:11px;color:#000;-webkit-text-stroke:0.1px #000;letter-spacing:0.133px">report.zakupki@prom.ua</div></div>
<div class="ab" style="left:19px;top:243.83px;width:1400px;height:11px;overflow:hidden"><div style="position:absolute;top:0;left:0;transform-origin:0 0;transform:scaleX(0.9);white-space:nowrap;font-size:10px;line-height:11px;color:#000;-webkit-text-stroke:0.1px #000;letter-spacing:0.278px">Список державних закупівель</div></div>
<div class="ab" style="left:15px;top:254px;width:1326px;height:2px;background:#217346;"></div>
<div class="ab" style="left:15px;top:256px;width:1326px;height:133px;background:#d6d6d6;"></div>
<div class="ab" style="left:17px;top:256px;width:1324px;height:1px;background:#fff;"></div>
<div class="ab" style="left:18px;top:257px;width:20px;height:132px;background:#008000;overflow:hidden;font-weight:bold;font-size:9px;color:#bddab0;letter-spacing:0.22px"><div style="position:absolute;left:0;width:21px;top:121.98px;text-align:center;white-space:nowrap;line-height:1;font-size:10.5px;color:#e0f0c8;">№</div></div>
<div class="ab" style="left:40px;top:257px;width:98px;height:132px;background:#005e00;overflow:hidden;font-weight:bold;font-size:9px;color:#bddab0;letter-spacing:0.22px"><div style="position:absolute;left:0;width:98px;top:112.88px;text-align:center;white-space:nowrap;line-height:1;">Ідентифікатор</div><div style="position:absolute;left:0;width:98px;top:123.58px;text-align:center;white-space:nowrap;line-height:1;">закупівлі</div></div>
<div class="ab" style="left:140px;top:257px;width:67px;height:132px;background:#005e00;overflow:hidden;font-weight:bold;font-size:9px;color:#bddab0;letter-spacing:0.22px"><div style="position:absolute;left:0;width:67px;top:112.88px;text-align:center;white-space:nowrap;line-height:1;">Ідентифікато</div><div style="position:absolute;left:0;width:67px;top:123.58px;text-align:center;white-space:nowrap;line-height:1;">р лота</div></div>
<div class="ab" style="left:209px;top:257px;width:156px;height:132px;background:#005e00;overflow:hidden;font-weight:bold;font-size:9px;color:#bddab0;letter-spacing:0.22px"><div style="position:absolute;left:0;width:156px;top:123.58px;text-align:center;white-space:nowrap;line-height:1;">Узагальнена назва закупівлі</div></div>
<div class="ab" style="left:367px;top:257px;width:150px;height:132px;background:#005e00;overflow:hidden;font-weight:bold;font-size:9px;color:#bddab0;letter-spacing:0.22px"><div style="position:absolute;left:0;width:150px;top:123.58px;text-align:center;white-space:nowrap;line-height:1;">Предмет закупівлі</div></div>
<div class="ab" style="left:519px;top:257px;width:125px;height:132px;background:#005e00;overflow:hidden;font-weight:bold;font-size:9px;color:#bddab0;letter-spacing:0.22px"><div style="position:absolute;left:0;width:125px;top:123.58px;text-align:center;white-space:nowrap;line-height:1;">Класифікатор</div></div>
<div class="ab" style="left:646px;top:257px;width:69px;height:132px;background:#005e00;overflow:hidden;font-weight:bold;font-size:9px;color:#bddab0;letter-spacing:0.22px"><div style="position:absolute;left:0;width:69px;top:112.88px;text-align:center;white-space:nowrap;line-height:1;">Тип</div><div style="position:absolute;left:0;width:69px;top:123.58px;text-align:center;white-space:nowrap;line-height:1;">процедури</div></div>
<div class="ab" style="left:717px;top:257px;width:40px;height:132px;background:#005e00;overflow:hidden;font-weight:bold;font-size:9px;color:#bddab0;letter-spacing:0.22px"><div style="position:absolute;left:0;width:40px;top:123.58px;text-align:center;white-space:nowrap;line-height:1;">ЕЦП</div></div>
<div class="ab" style="left:759px;top:257px;width:129px;height:132px;background:#005e00;overflow:hidden;font-weight:bold;font-size:9px;color:#bddab0;letter-spacing:0.22px"><div style="position:absolute;left:0;width:129px;top:123.58px;text-align:center;white-space:nowrap;line-height:1;">Організатор</div></div>
<div class="ab" style="left:890px;top:257px;width:40px;height:132px;background:#005e00;overflow:hidden;font-weight:bold;font-size:9px;color:#bddab0;letter-spacing:0.22px"><div style="position:absolute;left:0;width:40px;top:102.18px;text-align:center;white-space:nowrap;line-height:1;">ЄДРПОУ</div><div style="position:absolute;left:0;width:40px;top:112.88px;text-align:center;white-space:nowrap;line-height:1;">організ</div><div style="position:absolute;left:0;width:40px;top:123.58px;text-align:center;white-space:nowrap;line-height:1;">атора</div></div>
<div class="ab" style="left:932px;top:257px;width:75px;height:132px;background:#005e00;overflow:hidden;font-weight:bold;font-size:9px;color:#bddab0;letter-spacing:0.22px"><div style="position:absolute;left:0;width:75px;top:112.88px;text-align:center;white-space:nowrap;line-height:1;">Організатор</div><div style="position:absolute;left:0;width:75px;top:123.58px;text-align:center;white-space:nowrap;line-height:1;">закупівлі</div></div>
<div class="ab" style="left:1009px;top:257px;width:75px;height:132px;background:#005e00;overflow:hidden;font-weight:bold;font-size:9px;color:#bddab0;letter-spacing:0.22px"><div style="position:absolute;left:0;width:75px;top:112.88px;text-align:center;white-space:nowrap;line-height:1;">Основний</div><div style="position:absolute;left:0;width:75px;top:123.58px;text-align:center;white-space:nowrap;line-height:1;">контакт</div></div>
<div class="ab" style="left:1086px;top:257px;width:51px;height:132px;background:#005e00;overflow:hidden;font-weight:bold;font-size:9px;color:#bddab0;letter-spacing:0.22px"><div style="position:absolute;left:0;width:51px;top:91.48px;text-align:center;white-space:nowrap;line-height:1;">Всього</div><div style="position:absolute;left:0;width:51px;top:102.18px;text-align:center;white-space:nowrap;line-height:1;">запитань</div><div style="position:absolute;left:0;width:51px;top:112.88px;text-align:center;white-space:nowrap;line-height:1;">(без</div><div style="position:absolute;left:0;width:51px;top:123.58px;text-align:center;white-space:nowrap;line-height:1;">відповіді)</div></div>
<div class="ab" style="left:1139px;top:257px;width:52px;height:132px;background:#005e00;overflow:hidden;font-weight:bold;font-size:9px;color:#bddab0;letter-spacing:0.22px"><div style="position:absolute;left:0;width:52px;top:102.18px;text-align:center;white-space:nowrap;line-height:1;">Всього</div><div style="position:absolute;left:0;width:52px;top:112.88px;text-align:center;white-space:nowrap;line-height:1;">скарг (без</div><div style="position:absolute;left:0;width:52px;top:123.58px;text-align:center;white-space:nowrap;line-height:1;">рішення)</div></div>
<div class="ab" style="left:1193px;top:257px;width:52px;height:132px;background:#005e00;overflow:hidden;font-weight:bold;font-size:9px;color:#bddab0;letter-spacing:0.22px"><div style="position:absolute;left:0;width:52px;top:102.18px;text-align:center;white-space:nowrap;line-height:1;">Всього</div><div style="position:absolute;left:0;width:52px;top:112.88px;text-align:center;white-space:nowrap;line-height:1;">вимог (без</div><div style="position:absolute;left:0;width:52px;top:123.58px;text-align:center;white-space:nowrap;line-height:1;">рішення)</div></div>
<div class="ab" style="left:1247px;top:257px;width:51px;height:132px;background:#005e00;overflow:hidden;font-weight:bold;font-size:9px;color:#bddab0;letter-spacing:0.22px"><div style="position:absolute;left:0;width:51px;top:102.18px;text-align:center;white-space:nowrap;line-height:1;">Дата</div><div style="position:absolute;left:0;width:51px;top:112.88px;text-align:center;white-space:nowrap;line-height:1;">публікації</div><div style="position:absolute;left:0;width:51px;top:123.58px;text-align:center;white-space:nowrap;line-height:1;">закупівлі</div></div>
<div class="ab" style="left:1300px;top:257px;width:41px;height:132px;background:#005e00;overflow:hidden;font-weight:bold;font-size:9px;color:#bddab0;letter-spacing:0.22px"><div style="position:absolute;left:0;width:51px;top:102.18px;text-align:center;white-space:nowrap;line-height:1;">Дата</div><div style="position:absolute;left:0;width:51px;top:112.88px;text-align:center;white-space:nowrap;line-height:1;">уточнення</div><div style="position:absolute;left:0;width:51px;top:123.58px;text-align:center;white-space:nowrap;line-height:1;">з:</div></div>
<div class="ab" style="left:15px;top:254px;width:2px;height:136px;background:#217346;"></div>
<div class="ab" style="left:17px;top:256px;width:1px;height:133px;background:#fff;"></div>
<div class="ab" style="left:38px;top:256px;width:2px;height:133px;background:#fff;"></div>
<div class="ab" style="left:16px;top:389px;width:1325px;height:1px;background:#fff;"></div>
<div class="ab" style="left:0px;top:390px;width:1341px;height:1px;background:#8f8f8f;"></div>
<div class="ab" style="left:16px;top:391px;width:1325px;height:1px;background:#2d7a50;"></div>
<div class="ab" style="left:16px;top:401px;width:1325px;height:1px;background:#d4d4d4;"></div>
<div class="ab" style="left:39px;top:391px;width:1px;height:11px;background:#d4d4d4;"></div>
<div class="ab" style="left:17px;top:389.83px;width:20px;height:11px;overflow:hidden"><div style="position:absolute;top:0;right:0;transform-origin:100% 0;transform:scaleX(0.9);white-space:nowrap;font-size:10px;line-height:11px;color:#000;-webkit-text-stroke:0.1px #000;letter-spacing:0.078px">1</div></div>
<div class="ab" style="left:139px;top:391px;width:1px;height:11px;background:#d4d4d4;"></div>
<div class="ab" style="left:42px;top:389.83px;width:97px;height:11px;overflow:hidden"><div style="position:absolute;top:0;left:0;transform-origin:0 0;transform:scaleX(0.9);white-space:nowrap;font-size:10px;line-height:11px;color:#000;-webkit-text-stroke:0.1px #000;letter-spacing:0.078px">UA-2017-07-18-000030</div></div>
<div class="ab" style="left:208px;top:391px;width:1px;height:11px;background:#d4d4d4;"></div>
<div class="ab" style="left:142px;top:389.83px;width:66px;height:11px;overflow:hidden"><div style="position:absolute;top:0;left:0;transform-origin:0 0;transform:scaleX(0.9);white-space:nowrap;font-size:10px;line-height:11px;color:#000;-webkit-text-stroke:0.1px #000;letter-spacing:0.078px">5d4eb5bd21d64</div></div>
<div class="ab" style="left:366px;top:391px;width:1px;height:11px;background:#d4d4d4;"></div>
<div class="ab" style="left:211px;top:389.83px;width:155px;height:11px;overflow:hidden"><div style="position:absolute;top:0;left:0;transform-origin:0 0;transform:scaleX(0.9);white-space:nowrap;font-size:10px;line-height:11px;color:#000;-webkit-text-stroke:0.1px #000;letter-spacing:0.044px">Яйця курячі першої категорії та яйця</div></div>
<div class="ab" style="left:518px;top:391px;width:1px;height:11px;background:#d4d4d4;"></div>
<div class="ab" style="left:369px;top:389.83px;width:149px;height:11px;overflow:hidden"><div style="position:absolute;top:0;left:0;transform-origin:0 0;transform:scaleX(0.9);white-space:nowrap;font-size:10px;line-height:11px;color:#000;-webkit-text-stroke:0.1px #000;letter-spacing:0.044px">Яйця курячі першої категорії та яйця</div></div>
<div class="ab" style="left:645px;top:391px;width:1px;height:11px;background:#d4d4d4;"></div>
<div class="ab" style="left:521px;top:389.83px;width:124px;height:11px;overflow:hidden"><div style="position:absolute;top:0;left:0;transform-origin:0 0;transform:scaleX(0.9);white-space:nowrap;font-size:10px;line-height:11px;color:#000;-webkit-text-stroke:0.1px #000;letter-spacing:0.189px">03000000-1 Сільськогосподарська</div></div>
<div class="ab" style="left:716px;top:391px;width:1px;height:11px;background:#d4d4d4;"></div>
<div class="ab" style="left:648px;top:389.83px;width:68px;height:11px;overflow:hidden"><div style="position:absolute;top:0;left:0;transform-origin:0 0;transform:scaleX(0.9);white-space:nowrap;font-size:10px;line-height:11px;color:#000;-webkit-text-stroke:0.1px #000;letter-spacing:0.067px">Відкриті торги</div></div>
<div class="ab" style="left:758px;top:391px;width:1px;height:11px;background:#d4d4d4;"></div>
<div class="ab" style="left:719px;top:389.83px;width:39px;height:11px;overflow:hidden"><div style="position:absolute;top:0;left:0;transform-origin:0 0;transform:scaleX(0.9);white-space:nowrap;font-size:10px;line-height:11px;color:#000;-webkit-text-stroke:0.1px #000;letter-spacing:0.189px">Так</div></div>
<div class="ab" style="left:889px;top:391px;width:1px;height:11px;background:#d4d4d4;"></div>
<div class="ab" style="left:761px;top:389.83px;width:128px;height:11px;overflow:hidden"><div style="position:absolute;top:0;left:0;transform-origin:0 0;transform:scaleX(0.9);white-space:nowrap;font-size:10px;line-height:11px;color:#000;-webkit-text-stroke:0.1px #000;letter-spacing:0.189px">ООО "Осадчий Госзакупщик"</div></div>
<div class="ab" style="left:931px;top:391px;width:1px;height:11px;background:#d4d4d4;"></div>
<div class="ab" style="left:892px;top:389.83px;width:39px;height:11px;overflow:hidden"><div style="position:absolute;top:0;left:0;transform-origin:0 0;transform:scaleX(0.9);white-space:nowrap;font-size:10px;line-height:11px;color:#000;-webkit-text-stroke:0.1px #000;letter-spacing:0.078px">1234567</div></div>
<svg class="ab" style="left:890px;top:392px" width="4" height="4"><path d="M0 0H3.5L0 3.5Z" fill="#1e9e3a"/></svg>
<div class="ab" style="left:1008px;top:391px;width:1px;height:11px;background:#d4d4d4;"></div>
<div class="ab" style="left:934px;top:389.83px;width:74px;height:11px;overflow:hidden"><div style="position:absolute;top:0;left:0;transform-origin:0 0;transform:scaleX(0.9);white-space:nowrap;font-size:10px;line-height:11px;color:#000;-webkit-text-stroke:0.1px #000;letter-spacing:0.189px">Евгений Осадчий</div></div>
<div class="ab" style="left:1085px;top:391px;width:1px;height:11px;background:#d4d4d4;"></div>
<div class="ab" style="left:1011px;top:389.83px;width:74px;height:11px;overflow:hidden"><div style="position:absolute;top:0;left:0;transform-origin:0 0;transform:scaleX(0.9);white-space:nowrap;font-size:10px;line-height:11px;color:#000;-webkit-text-stroke:0.1px #000;letter-spacing:0.189px">Евгений Осадчий</div></div>
<div class="ab" style="left:1138px;top:391px;width:1px;height:11px;background:#d4d4d4;"></div>
<div class="ab" style="left:1088px;top:389.83px;width:50px;height:11px;overflow:hidden"><div style="position:absolute;top:0;left:0;transform-origin:0 0;transform:scaleX(0.9);white-space:nowrap;font-size:10px;line-height:11px;color:#000;-webkit-text-stroke:0.1px #000;letter-spacing:0.189px">0 (0)</div></div>
<div class="ab" style="left:1192px;top:391px;width:1px;height:11px;background:#d4d4d4;"></div>
<div class="ab" style="left:1141px;top:389.83px;width:51px;height:11px;overflow:hidden"><div style="position:absolute;top:0;left:0;transform-origin:0 0;transform:scaleX(0.9);white-space:nowrap;font-size:10px;line-height:11px;color:#000;-webkit-text-stroke:0.1px #000;letter-spacing:0.189px">1 (1)</div></div>
<div class="ab" style="left:1246px;top:391px;width:1px;height:11px;background:#d4d4d4;"></div>
<div class="ab" style="left:1195px;top:389.83px;width:51px;height:11px;overflow:hidden"><div style="position:absolute;top:0;left:0;transform-origin:0 0;transform:scaleX(0.9);white-space:nowrap;font-size:10px;line-height:11px;color:#000;-webkit-text-stroke:0.1px #000;letter-spacing:0.189px">1 (1)</div></div>
<div class="ab" style="left:1299px;top:391px;width:1px;height:11px;background:#d4d4d4;"></div>
<div class="ab" style="left:1247px;top:389.83px;width:50px;height:11px;overflow:hidden"><div style="position:absolute;top:0;right:0;transform-origin:100% 0;transform:scaleX(0.9);white-space:nowrap;font-size:10px;line-height:11px;color:#000;-webkit-text-stroke:0.1px #000;letter-spacing:0.078px">18.07.2017</div></div>
<div class="ab" style="left:1352px;top:391px;width:1px;height:11px;background:#d4d4d4;"></div>
<div class="ab" style="left:1300px;top:389.83px;width:50px;height:11px;overflow:hidden"><div style="position:absolute;top:0;right:0;transform-origin:100% 0;transform:scaleX(0.9);white-space:nowrap;font-size:10px;line-height:11px;color:#000;-webkit-text-stroke:0.1px #000;letter-spacing:0.078px">18.07.2017</div></div>
<div class="ab" style="left:16px;top:412px;width:1325px;height:1px;background:#d4d4d4;"></div>
<div class="ab" style="left:39px;top:402px;width:1px;height:11px;background:#d4d4d4;"></div>
<div class="ab" style="left:17px;top:400.83px;width:20px;height:11px;overflow:hidden"><div style="position:absolute;top:0;right:0;transform-origin:100% 0;transform:scaleX(0.9);white-space:nowrap;font-size:10px;line-height:11px;color:#000;-webkit-text-stroke:0.1px #000;letter-spacing:0.078px">2</div></div>
<div class="ab" style="left:139px;top:402px;width:1px;height:11px;background:#d4d4d4;"></div>
<div class="ab" style="left:42px;top:400.83px;width:97px;height:11px;overflow:hidden"><div style="position:absolute;top:0;left:0;transform-origin:0 0;transform:scaleX(0.9);white-space:nowrap;font-size:10px;line-height:11px;color:#000;-webkit-text-stroke:0.1px #000;letter-spacing:0.078px">UA-2017-07-18-000030</div></div>
<div class="ab" style="left:208px;top:402px;width:1px;height:11px;background:#d4d4d4;"></div>
<div class="ab" style="left:142px;top:400.83px;width:66px;height:11px;overflow:hidden"><div style="position:absolute;top:0;left:0;transform-origin:0 0;transform:scaleX(0.9);white-space:nowrap;font-size:10px;line-height:11px;color:#000;-webkit-text-stroke:0.1px #000;letter-spacing:0.078px">89e7b7b1d7734</div></div>
<div class="ab" style="left:366px;top:402px;width:1px;height:11px;background:#d4d4d4;"></div>
<div class="ab" style="left:211px;top:400.83px;width:155px;height:11px;overflow:hidden"><div style="position:absolute;top:0;left:0;transform-origin:0 0;transform:scaleX(0.9);white-space:nowrap;font-size:10px;line-height:11px;color:#000;-webkit-text-stroke:0.1px #000;letter-spacing:0.189px">Капуста головчаста білокачанна</div></div>
<div class="ab" style="left:518px;top:402px;width:1px;height:11px;background:#d4d4d4;"></div>
<div class="ab" style="left:369px;top:400.83px;width:149px;height:11px;overflow:hidden"><div style="position:absolute;top:0;left:0;transform-origin:0 0;transform:scaleX(0.9);white-space:nowrap;font-size:10px;line-height:11px;color:#000;-webkit-text-stroke:0.1px #000;letter-spacing:0.189px">Капуста головчаста білокачанна</div></div>
<div class="ab" style="left:645px;top:402px;width:1px;height:11px;background:#d4d4d4;"></div>
<div class="ab" style="left:521px;top:400.83px;width:124px;height:11px;overflow:hidden"><div style="position:absolute;top:0;left:0;transform-origin:0 0;transform:scaleX(0.9);white-space:nowrap;font-size:10px;line-height:11px;color:#000;-webkit-text-stroke:0.1px #000;letter-spacing:0.189px">03000000-1 Сільськогосподарська</div></div>
<div class="ab" style="left:716px;top:402px;width:1px;height:11px;background:#d4d4d4;"></div>
<div class="ab" style="left:648px;top:400.83px;width:68px;height:11px;overflow:hidden"><div style="position:absolute;top:0;left:0;transform-origin:0 0;transform:scaleX(0.9);white-space:nowrap;font-size:10px;line-height:11px;color:#000;-webkit-text-stroke:0.1px #000;letter-spacing:0.067px">Відкриті торги</div></div>
<div class="ab" style="left:758px;top:402px;width:1px;height:11px;background:#d4d4d4;"></div>
<div class="ab" style="left:719px;top:400.83px;width:39px;height:11px;overflow:hidden"><div style="position:absolute;top:0;left:0;transform-origin:0 0;transform:scaleX(0.9);white-space:nowrap;font-size:10px;line-height:11px;color:#000;-webkit-text-stroke:0.1px #000;letter-spacing:0.189px">Так</div></div>
<div class="ab" style="left:889px;top:402px;width:1px;height:11px;background:#d4d4d4;"></div>
<div class="ab" style="left:761px;top:400.83px;width:128px;height:11px;overflow:hidden"><div style="position:absolute;top:0;left:0;transform-origin:0 0;transform:scaleX(0.9);white-space:nowrap;font-size:10px;line-height:11px;color:#000;-webkit-text-stroke:0.1px #000;letter-spacing:0.189px">ООО "Осадчий Госзакупщик"</div></div>
<div class="ab" style="left:931px;top:402px;width:1px;height:11px;background:#d4d4d4;"></div>
<div class="ab" style="left:892px;top:400.83px;width:39px;height:11px;overflow:hidden"><div style="position:absolute;top:0;left:0;transform-origin:0 0;transform:scaleX(0.9);white-space:nowrap;font-size:10px;line-height:11px;color:#000;-webkit-text-stroke:0.1px #000;letter-spacing:0.078px">1234567</div></div>
<svg class="ab" style="left:890px;top:403px" width="4" height="4"><path d="M0 0H3.5L0 3.5Z" fill="#1e9e3a"/></svg>
<div class="ab" style="left:1008px;top:402px;width:1px;height:11px;background:#d4d4d4;"></div>
<div class="ab" style="left:934px;top:400.83px;width:74px;height:11px;overflow:hidden"><div style="position:absolute;top:0;left:0;transform-origin:0 0;transform:scaleX(0.9);white-space:nowrap;font-size:10px;line-height:11px;color:#000;-webkit-text-stroke:0.1px #000;letter-spacing:0.189px">Евгений Осадчий</div></div>
<div class="ab" style="left:1085px;top:402px;width:1px;height:11px;background:#d4d4d4;"></div>
<div class="ab" style="left:1011px;top:400.83px;width:74px;height:11px;overflow:hidden"><div style="position:absolute;top:0;left:0;transform-origin:0 0;transform:scaleX(0.9);white-space:nowrap;font-size:10px;line-height:11px;color:#000;-webkit-text-stroke:0.1px #000;letter-spacing:0.189px">Евгений Осадчий</div></div>
<div class="ab" style="left:1138px;top:402px;width:1px;height:11px;background:#d4d4d4;"></div>
<div class="ab" style="left:1088px;top:400.83px;width:50px;height:11px;overflow:hidden"><div style="position:absolute;top:0;left:0;transform-origin:0 0;transform:scaleX(0.9);white-space:nowrap;font-size:10px;line-height:11px;color:#000;-webkit-text-stroke:0.1px #000;letter-spacing:0.189px">0 (0)</div></div>
<div class="ab" style="left:1192px;top:402px;width:1px;height:11px;background:#d4d4d4;"></div>
<div class="ab" style="left:1141px;top:400.83px;width:51px;height:11px;overflow:hidden"><div style="position:absolute;top:0;left:0;transform-origin:0 0;transform:scaleX(0.9);white-space:nowrap;font-size:10px;line-height:11px;color:#000;-webkit-text-stroke:0.1px #000;letter-spacing:0.189px">0 (0)</div></div>
<div class="ab" style="left:1246px;top:402px;width:1px;height:11px;background:#d4d4d4;"></div>
<div class="ab" style="left:1195px;top:400.83px;width:51px;height:11px;overflow:hidden"><div style="position:absolute;top:0;left:0;transform-origin:0 0;transform:scaleX(0.9);white-space:nowrap;font-size:10px;line-height:11px;color:#000;-webkit-text-stroke:0.1px #000;letter-spacing:0.189px">2 (1)</div></div>
<div class="ab" style="left:1299px;top:402px;width:1px;height:11px;background:#d4d4d4;"></div>
<div class="ab" style="left:1247px;top:400.83px;width:50px;height:11px;overflow:hidden"><div style="position:absolute;top:0;right:0;transform-origin:100% 0;transform:scaleX(0.9);white-space:nowrap;font-size:10px;line-height:11px;color:#000;-webkit-text-stroke:0.1px #000;letter-spacing:0.078px">18.07.2017</div></div>
<div class="ab" style="left:1352px;top:402px;width:1px;height:11px;background:#d4d4d4;"></div>
<div class="ab" style="left:1300px;top:400.83px;width:50px;height:11px;overflow:hidden"><div style="position:absolute;top:0;right:0;transform-origin:100% 0;transform:scaleX(0.9);white-space:nowrap;font-size:10px;line-height:11px;color:#000;-webkit-text-stroke:0.1px #000;letter-spacing:0.078px">18.07.2017</div></div>
<div class="ab" style="left:16px;top:423px;width:1325px;height:1px;background:#d4d4d4;"></div>
<div class="ab" style="left:39px;top:413px;width:1px;height:11px;background:#d4d4d4;"></div>
<div class="ab" style="left:17px;top:411.83px;width:20px;height:11px;overflow:hidden"><div style="position:absolute;top:0;right:0;transform-origin:100% 0;transform:scaleX(0.9);white-space:nowrap;font-size:10px;line-height:11px;color:#000;-webkit-text-stroke:0.1px #000;letter-spacing:0.078px">3</div></div>
<div class="ab" style="left:139px;top:413px;width:1px;height:11px;background:#d4d4d4;"></div>
<div class="ab" style="left:42px;top:411.83px;width:97px;height:11px;overflow:hidden"><div style="position:absolute;top:0;left:0;transform-origin:0 0;transform:scaleX(0.9);white-space:nowrap;font-size:10px;line-height:11px;color:#000;-webkit-text-stroke:0.1px #000;letter-spacing:0.078px">UA-2017-07-18-000031</div></div>
<div class="ab" style="left:208px;top:413px;width:1px;height:11px;background:#d4d4d4;"></div>
<div class="ab" style="left:142px;top:411.83px;width:66px;height:11px;overflow:hidden"><div style="position:absolute;top:0;left:0;transform-origin:0 0;transform:scaleX(0.9);white-space:nowrap;font-size:10px;line-height:11px;color:#000;-webkit-text-stroke:0.1px #000;letter-spacing:0.078px">89e7b7b1d7734</div></div>
<div class="ab" style="left:366px;top:413px;width:1px;height:11px;background:#d4d4d4;"></div>
<div class="ab" style="left:211px;top:411.83px;width:155px;height:11px;overflow:hidden"><div style="position:absolute;top:0;left:0;transform-origin:0 0;transform:scaleX(0.9);white-space:nowrap;font-size:10px;line-height:11px;color:#000;-webkit-text-stroke:0.1px #000;letter-spacing:0.222px">Зернові культури та картопля</div></div>
<div class="ab" style="left:518px;top:413px;width:1px;height:11px;background:#d4d4d4;"></div>
<div class="ab" style="left:369px;top:411.83px;width:149px;height:11px;overflow:hidden"><div style="position:absolute;top:0;left:0;transform-origin:0 0;transform:scaleX(0.9);white-space:nowrap;font-size:10px;line-height:11px;color:#000;-webkit-text-stroke:0.1px #000;letter-spacing:0.222px">Зернові культури та картопля</div></div>
<div class="ab" style="left:645px;top:413px;width:1px;height:11px;background:#d4d4d4;"></div>
<div class="ab" style="left:521px;top:411.83px;width:124px;height:11px;overflow:hidden"><div style="position:absolute;top:0;left:0;transform-origin:0 0;transform:scaleX(0.9);white-space:nowrap;font-size:10px;line-height:11px;color:#000;-webkit-text-stroke:0.1px #000;letter-spacing:0.189px">03000000-1 Сільськогосподарська</div></div>
<div class="ab" style="left:716px;top:413px;width:1px;height:11px;background:#d4d4d4;"></div>
<div class="ab" style="left:648px;top:411.83px;width:68px;height:11px;overflow:hidden"><div style="position:absolute;top:0;left:0;transform-origin:0 0;transform:scaleX(0.9);white-space:nowrap;font-size:10px;line-height:11px;color:#000;-webkit-text-stroke:0.1px #000;letter-spacing:0.067px">Відкриті торги</div></div>
<div class="ab" style="left:758px;top:413px;width:1px;height:11px;background:#d4d4d4;"></div>
<div class="ab" style="left:719px;top:411.83px;width:39px;height:11px;overflow:hidden"><div style="position:absolute;top:0;left:0;transform-origin:0 0;transform:scaleX(0.9);white-space:nowrap;font-size:10px;line-height:11px;color:#000;-webkit-text-stroke:0.1px #000;letter-spacing:0.189px">Так</div></div>
<div class="ab" style="left:889px;top:413px;width:1px;height:11px;background:#d4d4d4;"></div>
<div class="ab" style="left:761px;top:411.83px;width:128px;height:11px;overflow:hidden"><div style="position:absolute;top:0;left:0;transform-origin:0 0;transform:scaleX(0.9);white-space:nowrap;font-size:10px;line-height:11px;color:#000;-webkit-text-stroke:0.1px #000;letter-spacing:0.189px">ООО "Осадчий Госзакупщик"</div></div>
<div class="ab" style="left:931px;top:413px;width:1px;height:11px;background:#d4d4d4;"></div>
<div class="ab" style="left:892px;top:411.83px;width:39px;height:11px;overflow:hidden"><div style="position:absolute;top:0;left:0;transform-origin:0 0;transform:scaleX(0.9);white-space:nowrap;font-size:10px;line-height:11px;color:#000;-webkit-text-stroke:0.1px #000;letter-spacing:0.078px">1234567</div></div>
<svg class="ab" style="left:890px;top:414px" width="4" height="4"><path d="M0 0H3.5L0 3.5Z" fill="#1e9e3a"/></svg>
<div class="ab" style="left:1008px;top:413px;width:1px;height:11px;background:#d4d4d4;"></div>
<div class="ab" style="left:934px;top:411.83px;width:74px;height:11px;overflow:hidden"><div style="position:absolute;top:0;left:0;transform-origin:0 0;transform:scaleX(0.9);white-space:nowrap;font-size:10px;line-height:11px;color:#000;-webkit-text-stroke:0.1px #000;letter-spacing:0.189px">Евгений Осадчий</div></div>
<div class="ab" style="left:1085px;top:413px;width:1px;height:11px;background:#d4d4d4;"></div>
<div class="ab" style="left:1011px;top:411.83px;width:74px;height:11px;overflow:hidden"><div style="position:absolute;top:0;left:0;transform-origin:0 0;transform:scaleX(0.9);white-space:nowrap;font-size:10px;line-height:11px;color:#000;-webkit-text-stroke:0.1px #000;letter-spacing:0.189px">Евгений Осадчий</div></div>
<div class="ab" style="left:1138px;top:413px;width:1px;height:11px;background:#d4d4d4;"></div>
<div class="ab" style="left:1088px;top:411.83px;width:50px;height:11px;overflow:hidden"><div style="position:absolute;top:0;left:0;transform-origin:0 0;transform:scaleX(0.9);white-space:nowrap;font-size:10px;line-height:11px;color:#000;-webkit-text-stroke:0.1px #000;letter-spacing:0.189px">0 (0)</div></div>
<div class="ab" style="left:1192px;top:413px;width:1px;height:11px;background:#d4d4d4;"></div>
<div class="ab" style="left:1141px;top:411.83px;width:51px;height:11px;overflow:hidden"><div style="position:absolute;top:0;left:0;transform-origin:0 0;transform:scaleX(0.9);white-space:nowrap;font-size:10px;line-height:11px;color:#000;-webkit-text-stroke:0.1px #000;letter-spacing:0.189px">0 (0)</div></div>
<div class="ab" style="left:1246px;top:413px;width:1px;height:11px;background:#d4d4d4;"></div>
<div class="ab" style="left:1195px;top:411.83px;width:51px;height:11px;overflow:hidden"><div style="position:absolute;top:0;left:0;transform-origin:0 0;transform:scaleX(0.9);white-space:nowrap;font-size:10px;line-height:11px;color:#000;-webkit-text-stroke:0.1px #000;letter-spacing:0.189px">1 (1)</div></div>
<div class="ab" style="left:1299px;top:413px;width:1px;height:11px;background:#d4d4d4;"></div>
<div class="ab" style="left:1247px;top:411.83px;width:50px;height:11px;overflow:hidden"><div style="position:absolute;top:0;right:0;transform-origin:100% 0;transform:scaleX(0.9);white-space:nowrap;font-size:10px;line-height:11px;color:#000;-webkit-text-stroke:0.1px #000;letter-spacing:0.078px">18.07.2017</div></div>
<div class="ab" style="left:1352px;top:413px;width:1px;height:11px;background:#d4d4d4;"></div>
<div class="ab" style="left:1300px;top:411.83px;width:50px;height:11px;overflow:hidden"><div style="position:absolute;top:0;right:0;transform-origin:100% 0;transform:scaleX(0.9);white-space:nowrap;font-size:10px;line-height:11px;color:#000;-webkit-text-stroke:0.1px #000;letter-spacing:0.078px">18.07.2017</div></div>
<div class="ab" style="left:16px;top:434px;width:1325px;height:1px;background:#d4d4d4;"></div>
<div class="ab" style="left:39px;top:424px;width:1px;height:11px;background:#d4d4d4;"></div>
<div class="ab" style="left:17px;top:422.83px;width:20px;height:11px;overflow:hidden"><div style="position:absolute;top:0;right:0;transform-origin:100% 0;transform:scaleX(0.9);white-space:nowrap;font-size:10px;line-height:11px;color:#000;-webkit-text-stroke:0.1px #000;letter-spacing:0.078px">4</div></div>
<div class="ab" style="left:139px;top:424px;width:1px;height:11px;background:#d4d4d4;"></div>
<div class="ab" style="left:42px;top:422.83px;width:97px;height:11px;overflow:hidden"><div style="position:absolute;top:0;left:0;transform-origin:0 0;transform:scaleX(0.9);white-space:nowrap;font-size:10px;line-height:11px;color:#000;-webkit-text-stroke:0.1px #000;letter-spacing:0.078px">UA-2017-07-18-000032</div></div>
<div class="ab" style="left:208px;top:424px;width:1px;height:11px;background:#d4d4d4;"></div>
<div class="ab" style="left:142px;top:422.83px;width:66px;height:11px;overflow:hidden"><div style="position:absolute;top:0;left:0;transform-origin:0 0;transform:scaleX(0.9);white-space:nowrap;font-size:10px;line-height:11px;color:#000;-webkit-text-stroke:0.1px #000;letter-spacing:0.078px">89e7b7b1d7734</div></div>
<div class="ab" style="left:366px;top:424px;width:1px;height:11px;background:#d4d4d4;"></div>
<div class="ab" style="left:211px;top:422.83px;width:155px;height:11px;overflow:hidden"><div style="position:absolute;top:0;left:0;transform-origin:0 0;transform:scaleX(0.9);white-space:nowrap;font-size:10px;line-height:11px;color:#000;-webkit-text-stroke:0.1px #000;letter-spacing:0.222px">Зернові культури та картопля</div></div>
<div class="ab" style="left:518px;top:424px;width:1px;height:11px;background:#d4d4d4;"></div>
<div class="ab" style="left:369px;top:422.83px;width:149px;height:11px;overflow:hidden"><div style="position:absolute;top:0;left:0;transform-origin:0 0;transform:scaleX(0.9);white-space:nowrap;font-size:10px;line-height:11px;color:#000;-webkit-text-stroke:0.1px #000;letter-spacing:0.222px">Зернові культури та картопля</div></div>
<div class="ab" style="left:645px;top:424px;width:1px;height:11px;background:#d4d4d4;"></div>
<div class="ab" style="left:521px;top:422.83px;width:124px;height:11px;overflow:hidden"><div style="position:absolute;top:0;left:0;transform-origin:0 0;transform:scaleX(0.9);white-space:nowrap;font-size:10px;line-height:11px;color:#000;-webkit-text-stroke:0.1px #000;letter-spacing:0.189px">03000000-1 Сільськогосподарська</div></div>
<div class="ab" style="left:716px;top:424px;width:1px;height:11px;background:#d4d4d4;"></div>
<div class="ab" style="left:648px;top:422.83px;width:68px;height:11px;overflow:hidden"><div style="position:absolute;top:0;left:0;transform-origin:0 0;transform:scaleX(0.9);white-space:nowrap;font-size:10px;line-height:11px;color:#000;-webkit-text-stroke:0.1px #000;letter-spacing:0.067px">Відкриті торги</div></div>
<div class="ab" style="left:758px;top:424px;width:1px;height:11px;background:#d4d4d4;"></div>
<div class="ab" style="left:719px;top:422.83px;width:39px;height:11px;overflow:hidden"><div style="position:absolute;top:0;left:0;transform-origin:0 0;transform:scaleX(0.9);white-space:nowrap;font-size:10px;line-height:11px;color:#000;-webkit-text-stroke:0.1px #000;letter-spacing:0.189px">Так</div></div>
<div class="ab" style="left:889px;top:424px;width:1px;height:11px;background:#d4d4d4;"></div>
<div class="ab" style="left:761px;top:422.83px;width:128px;height:11px;overflow:hidden"><div style="position:absolute;top:0;left:0;transform-origin:0 0;transform:scaleX(0.9);white-space:nowrap;font-size:10px;line-height:11px;color:#000;-webkit-text-stroke:0.1px #000;letter-spacing:0.189px">ООО "Осадчий Госзакупщик"</div></div>
<div class="ab" style="left:931px;top:424px;width:1px;height:11px;background:#d4d4d4;"></div>
<div class="ab" style="left:892px;top:422.83px;width:39px;height:11px;overflow:hidden"><div style="position:absolute;top:0;left:0;transform-origin:0 0;transform:scaleX(0.9);white-space:nowrap;font-size:10px;line-height:11px;color:#000;-webkit-text-stroke:0.1px #000;letter-spacing:0.078px">1234567</div></div>
<svg class="ab" style="left:890px;top:425px" width="4" height="4"><path d="M0 0H3.5L0 3.5Z" fill="#1e9e3a"/></svg>
<div class="ab" style="left:1008px;top:424px;width:1px;height:11px;background:#d4d4d4;"></div>
<div class="ab" style="left:934px;top:422.83px;width:74px;height:11px;overflow:hidden"><div style="position:absolute;top:0;left:0;transform-origin:0 0;transform:scaleX(0.9);white-space:nowrap;font-size:10px;line-height:11px;color:#000;-webkit-text-stroke:0.1px #000;letter-spacing:0.189px">Евгений Осадчий</div></div>
<div class="ab" style="left:1085px;top:424px;width:1px;height:11px;background:#d4d4d4;"></div>
<div class="ab" style="left:1011px;top:422.83px;width:74px;height:11px;overflow:hidden"><div style="position:absolute;top:0;left:0;transform-origin:0 0;transform:scaleX(0.9);white-space:nowrap;font-size:10px;line-height:11px;color:#000;-webkit-text-stroke:0.1px #000;letter-spacing:0.189px">Евгений Осадчий</div></div>
<div class="ab" style="left:1138px;top:424px;width:1px;height:11px;background:#d4d4d4;"></div>
<div class="ab" style="left:1088px;top:422.83px;width:50px;height:11px;overflow:hidden"><div style="position:absolute;top:0;left:0;transform-origin:0 0;transform:scaleX(0.9);white-space:nowrap;font-size:10px;line-height:11px;color:#000;-webkit-text-stroke:0.1px #000;letter-spacing:0.189px">1 (1)</div></div>
<div class="ab" style="left:1192px;top:424px;width:1px;height:11px;background:#d4d4d4;"></div>
<div class="ab" style="left:1141px;top:422.83px;width:51px;height:11px;overflow:hidden"><div style="position:absolute;top:0;left:0;transform-origin:0 0;transform:scaleX(0.9);white-space:nowrap;font-size:10px;line-height:11px;color:#000;-webkit-text-stroke:0.1px #000;letter-spacing:0.189px">1 (1)</div></div>
<div class="ab" style="left:1246px;top:424px;width:1px;height:11px;background:#d4d4d4;"></div>
<div class="ab" style="left:1195px;top:422.83px;width:51px;height:11px;overflow:hidden"><div style="position:absolute;top:0;left:0;transform-origin:0 0;transform:scaleX(0.9);white-space:nowrap;font-size:10px;line-height:11px;color:#000;-webkit-text-stroke:0.1px #000;letter-spacing:0.189px">0 (0)</div></div>
<div class="ab" style="left:1299px;top:424px;width:1px;height:11px;background:#d4d4d4;"></div>
<div class="ab" style="left:1247px;top:422.83px;width:50px;height:11px;overflow:hidden"><div style="position:absolute;top:0;right:0;transform-origin:100% 0;transform:scaleX(0.9);white-space:nowrap;font-size:10px;line-height:11px;color:#000;-webkit-text-stroke:0.1px #000;letter-spacing:0.078px">18.07.2017</div></div>
<div class="ab" style="left:1352px;top:424px;width:1px;height:11px;background:#d4d4d4;"></div>
<div class="ab" style="left:1300px;top:422.83px;width:50px;height:11px;overflow:hidden"><div style="position:absolute;top:0;right:0;transform-origin:100% 0;transform:scaleX(0.9);white-space:nowrap;font-size:10px;line-height:11px;color:#000;-webkit-text-stroke:0.1px #000;letter-spacing:0.078px">18.07.2017</div></div>
<div class="ab" style="left:15px;top:388px;width:6px;height:5px;background:#217346;"></div>
<div class="ab" style="left:21px;top:388px;width:1px;height:3px;background:#fff;"></div>
<div class="ab" style="left:1341px;top:198px;width:17px;height:230px;background:#e6e6e6;"></div>
<div class="ab" style="left:1341px;top:211px;width:1px;height:217px;background:#9f9f9f;"></div>
<div class="ab" style="left:1345px;top:200px;width:13px;height:228px;background:#dadada;"></div>
<div class="ab" style="left:1345px;top:200px;width:13px;height:93px;background:#fff;border-left:1px solid #b4b4b4;border-top:1px solid #b4b4b4;border-bottom:1px solid #aaaaaa"></div>
<div class="ab" style="left:1345px;top:214px;width:13px;height:2px;background:#b8b8b8;"></div>
<svg class="ab" style="left:1348px;top:204px" width="9" height="6"><path d="M1 5 L4.5 1.2 L8 5Z" fill="#6a6a6a"/></svg>
<svg class="ab" style="left:0;top:0" width="1358" height="428" viewBox="0 0 1358 428">
<path d="M432 90.5 H515.5 V84 L602 96 V98.5 L515.5 110 V104 H432 Z" fill="#22b14c"/>
</svg>
</body></html>
